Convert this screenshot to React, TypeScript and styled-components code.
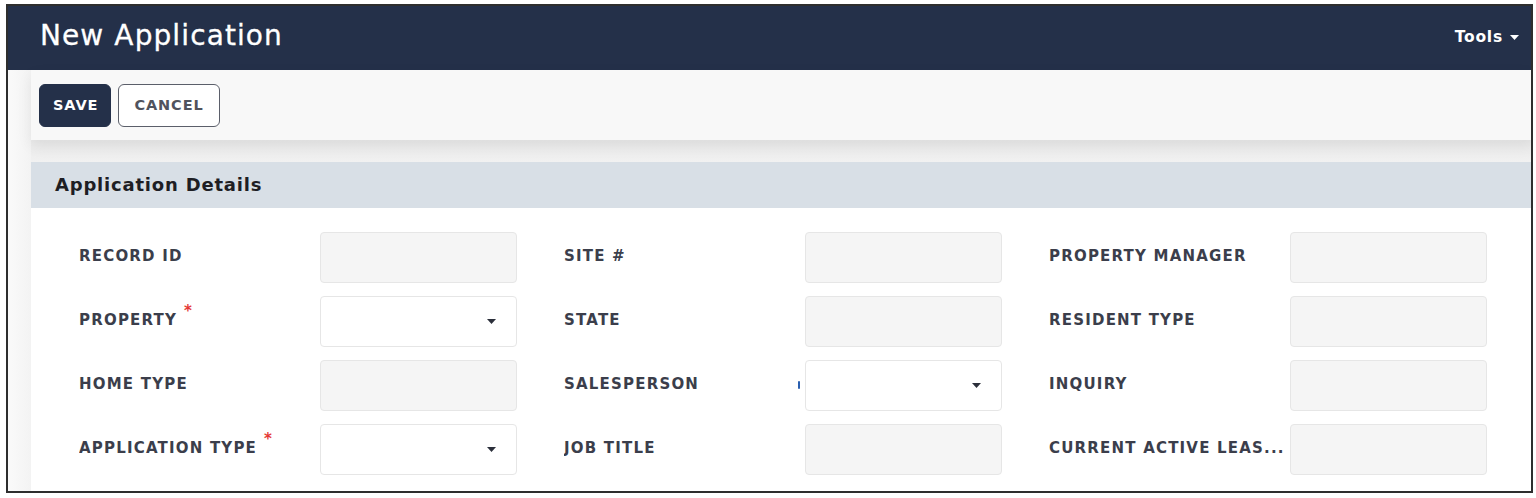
import React from "react";
import styled, { createGlobalStyle } from "styled-components";

const Global = createGlobalStyle`
  html, body { margin: 0; padding: 0; background: #ffffff; }
  body { font-family: "DejaVu Sans", "Open Sans", sans-serif; }
  * { box-sizing: border-box; }
`;

const Page = styled.div`
  padding: 4px 3px 5px 6px;
  width: 1536px;
  height: 498px;
`;

const Frame = styled.div`
  border: 2px solid #2e2e2e;
  height: 489px;
  display: flex;
  flex-direction: column;
  overflow: hidden;
`;

const Header = styled.header`
  height: 64px;
  background: #243049;
  display: flex;
  align-items: center;
  justify-content: space-between;
  padding: 0 12px 0 32px;
  flex-shrink: 0;
`;

const Title = styled.h1`
  margin: 0;
  color: #ffffff;
  font-size: 28px;
  font-weight: 400;
  letter-spacing: 1.1px;
  padding-bottom: 6px;
  -webkit-text-stroke: 0.3px #ffffff;
`;

const ToolsMenu = styled.button`
  background: none;
  border: none;
  color: #ffffff;
  font-family: inherit;
  font-size: 15.5px;
  font-weight: 700;
  letter-spacing: 0.8px;
  display: flex;
  align-items: center;
  gap: 7px;
  padding: 0 0 2px;
  cursor: pointer;
`;

const Body = styled.div`
  flex: 1;
  display: flex;
  background: #f4f4f4;
  min-height: 0;
`;

const Gutter = styled.div`
  width: 23px;
  flex-shrink: 0;
  background: linear-gradient(to right, #fafafa, #f3f3f3);
`;

const Main = styled.div`
  flex: 1;
  display: flex;
  flex-direction: column;
`;

const Toolbar = styled.div`
  height: 70px;
  background: #f8f8f8;
  display: flex;
  align-items: center;
  gap: 7px;
  padding: 0 8px;
  box-shadow: 0 6px 14px rgba(0, 0, 0, 0.07);
  position: relative;
  z-index: 1;
`;

const ToolbarSpacer = styled.div`
  height: 22px;
  background: linear-gradient(to bottom, #ebebeb, #eeeeee 60%, #f1f1f1);
`;

const Button = styled.button<{ $primary?: boolean }>`
  height: 43px;
  padding: ${(p) => (p.$primary ? "0 12px 0 13px" : "0 15px 0 15px")};
  border-radius: 6px;
  font-family: inherit;
  font-size: 14.5px;
  font-weight: 700;
  letter-spacing: 0.9px;
  cursor: pointer;
  background: ${(p) => (p.$primary ? "#243049" : "#ffffff")};
  color: ${(p) => (p.$primary ? "#ffffff" : "#50535d")};
  border: 1px solid ${(p) => (p.$primary ? "#243049" : "#5b5f6a")};
`;

const Section = styled.section`
  flex: 1;
  background: #ffffff;
  display: flex;
  flex-direction: column;
`;

const SectionHeader = styled.div`
  height: 46px;
  background: #d8dfe6;
  display: flex;
  align-items: center;
  padding: 0 0 1px 24px;
  font-size: 18px;
  font-weight: 700;
  letter-spacing: 0.8px;
  color: #1e1e24;
`;

const Form = styled.div`
  display: grid;
  grid-template-columns: repeat(3, 485px);
  grid-auto-rows: 51px;
  row-gap: 13px;
  padding: 24px 0 0 48px;
`;

const Field = styled.div`
  display: grid;
  grid-template-columns: 241px 197px;
  align-items: center;
`;

const Label = styled.label`
  font-size: 15px;
  font-weight: 700;
  color: #3b3e4b;
  letter-spacing: 1.2px;
  text-transform: uppercase;
  display: flex;
  align-items: center;
  padding-bottom: 4px;
  min-width: 0;
`;

const LabelText = styled.span`
  white-space: nowrap;
  overflow: hidden;
`;

const Required = styled.span`
  color: #e53935;
  font-size: 15px;
  font-weight: 700;
  margin-left: 7px;
  position: relative;
  top: -9px;
`;

const InputBox = styled.div<{ $select?: boolean }>`
  height: 51px;
  border-radius: 4px;
  border: 1px solid #e6e6e6;
  background: ${(p) => (p.$select ? "#ffffff" : "#f5f5f5")};
  display: flex;
  align-items: center;
  justify-content: flex-end;
  padding-right: 20px;
  position: relative;
`;

const Marker = styled.span`
  position: absolute;
  left: -8px;
  top: 20px;
  width: 2px;
  height: 8px;
  border-radius: 1px;
  background: #2a5fb0;
`;

const Caret = ({ color }: { color: string }) => (
  <svg width="9" height="5" viewBox="0 0 9 5">
    <path d="M0 0 H9 L4.5 5 Z" fill={color} />
  </svg>
);

type F = { label: string; select?: boolean; required?: boolean; marker?: boolean };

const fields: F[] = [
  { label: "Record ID" },
  { label: "Site #" },
  { label: "Property Manager" },
  { label: "Property", select: true, required: true },
  { label: "State" },
  { label: "Resident Type" },
  { label: "Home Type" },
  { label: "Salesperson", select: true, marker: true },
  { label: "Inquiry" },
  { label: "Application Type", select: true, required: true },
  { label: "Job Title" },
  { label: "Current Active Leas..." },
];

export default function App() {
  return (
    <>
      <Global />
      <Page>
        <Frame>
          <Header>
            <Title>New Application</Title>
            <ToolsMenu>
              Tools <Caret color="#ffffff" />
            </ToolsMenu>
          </Header>
          <Body>
            <Gutter />
            <Main>
              <Toolbar>
                <Button $primary>SAVE</Button>
                <Button>CANCEL</Button>
              </Toolbar>
              <ToolbarSpacer />
              <Section>
                <SectionHeader>Application Details</SectionHeader>
                <Form>
                  {fields.map((f) => (
                    <Field key={f.label}>
                      <Label>
                        <LabelText>{f.label}</LabelText>
                        {f.required && <Required>*</Required>}
                      </Label>
                      <InputBox $select={f.select}>
                        {f.marker && <Marker />}
                        {f.select && <Caret color="#2b2f3a" />}
                      </InputBox>
                    </Field>
                  ))}
                </Form>
              </Section>
            </Main>
          </Body>
        </Frame>
      </Page>
    </>
  );
}
